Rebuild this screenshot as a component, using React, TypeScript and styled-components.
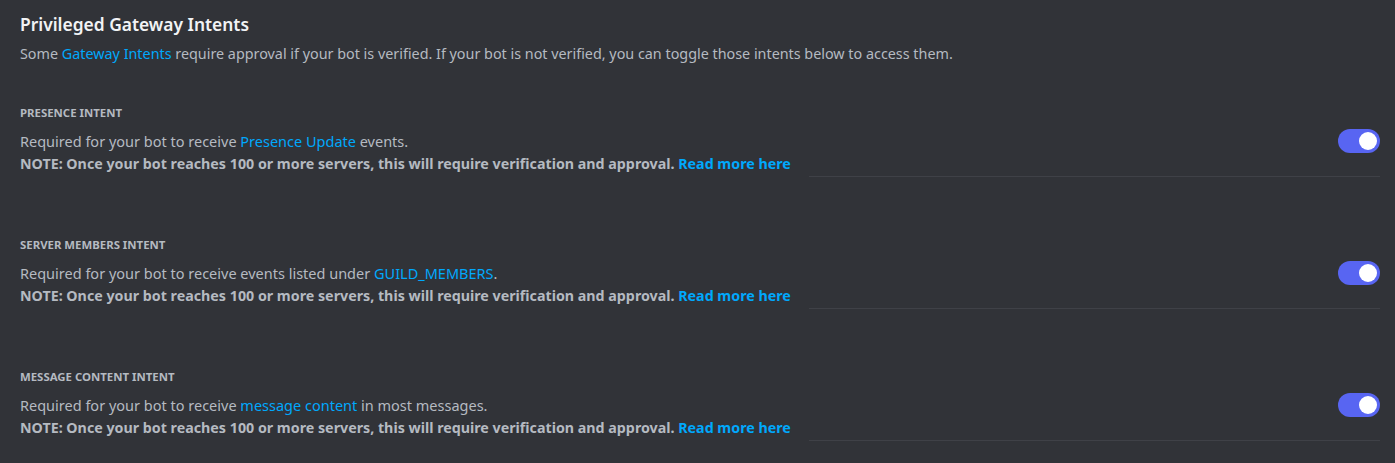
import React from "react";
import styled, { createGlobalStyle } from "styled-components";

const Global = createGlobalStyle`
  html, body { margin: 0; padding: 0; background: #313338; }
  body { font-family: "Noto Sans", "Open Sans", sans-serif; }
`;

const Page = styled.div`
  background: #313338;
  width: 1395px;
  height: 463px;
  box-sizing: border-box;
  padding: 12px 15px 0 20px;
  overflow: hidden;
`;

const Title = styled.h2`
  margin: 0;
  font-size: 17.4px;
  line-height: 24px;
  font-weight: 600;
  color: #f2f3f5;
`;

const Subtitle = styled.p`
  margin: 8px 0 0;
  font-size: 14.35px;
  line-height: 20px;
  color: #b5bac1;
`;

const Link = styled.a<{ $bold?: boolean }>`
  color: #00a8fc;
  text-decoration: none;
  font-weight: ${(p) => (p.$bold ? 700 : 400)};
`;

const Section = styled.section`
  margin-top: 41px;
  & + & { margin-top: 60px; }
`;

const Label = styled.h3`
  margin: 0 0 10px;
  font-size: 11.4px;
  line-height: 16px;
  font-weight: 700;
  text-transform: uppercase;
  color: #b5bac1;
`;

const Row = styled.div`
  display: flex;
  align-items: flex-start;
  justify-content: space-between;
`;

const Text = styled.div`
  display: flex;
  flex-direction: column;
  gap: 3px;
`;

const Body = styled.p`
  margin: 0;
  font-size: 14.5px;
  line-height: 20px;
  color: #b5bac1;
`;

const Note = styled.p`
  margin: 0;
  font-size: 14.25px;
  line-height: 20px;
  font-weight: 700;
  color: #b5bac1;
`;

const Toggle = styled.div`
  position: relative;
  margin-top: -2px;
  width: 42px;
  height: 24px;
  border-radius: 12px;
  background: #5865f2;
  flex-shrink: 0;
  &::after {
    content: "";
    position: absolute;
    top: 3px;
    right: 3px;
    width: 18px;
    height: 18px;
    border-radius: 50%;
    background: #fff;
  }
`;

const Divider = styled.div`
  margin: 2px 0 0 auto;
  width: 571px;
  height: 1px;
  background: #3f4147;
`;

const intents = [
  {
    label: "Presence Intent",
    body: (
      <>
        Required for your bot to receive <Link href="#">Presence Update</Link> events.
      </>
    ),
  },
  {
    label: "Server Members Intent",
    body: (
      <>
        Required for your bot to receive events listed under <Link href="#">GUILD_MEMBERS</Link>.
      </>
    ),
  },
  {
    label: "Message Content Intent",
    body: (
      <>
        Required for your bot to receive <Link href="#">message content</Link> in most messages.
      </>
    ),
  },
];

export default function App() {
  return (
    <Page>
      <Global />
      <Title>Privileged Gateway Intents</Title>
      <Subtitle>
        Some <Link href="#">Gateway Intents</Link> require approval if your bot is verified. If your bot is not
        verified, you can toggle those intents below to access them.
      </Subtitle>
      {intents.map((it) => (
        <Section key={it.label}>
          <Label>{it.label}</Label>
          <Row>
            <Text>
              <Body>{it.body}</Body>
              <Note>
                NOTE: Once your bot reaches 100 or more servers, this will require verification and approval.{" "}
                <Link href="#" $bold>
                  Read more here
                </Link>
              </Note>
            </Text>
            <Toggle />
          </Row>
          <Divider />
        </Section>
      ))}
    </Page>
  );
}
